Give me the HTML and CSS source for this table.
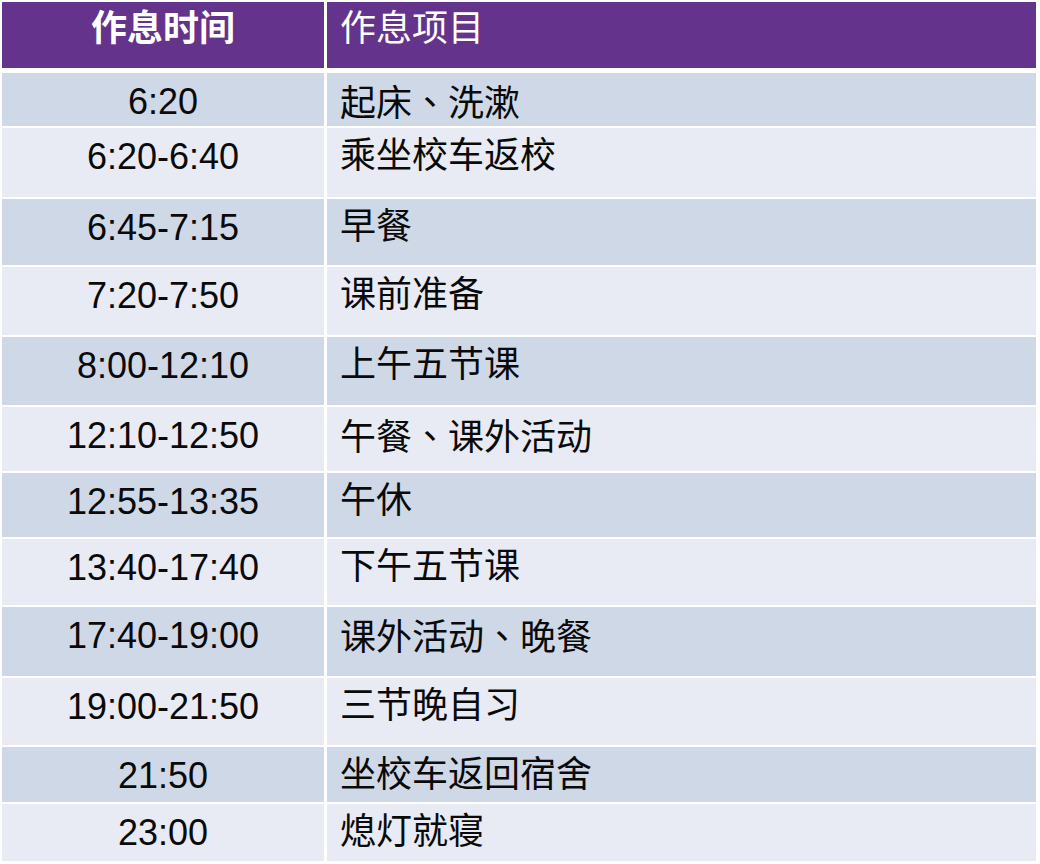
FILE: index.html
```html
<!DOCTYPE html>
<html lang="zh-CN">
<head>
<meta charset="utf-8">
<title>作息时间表</title>
<link rel="stylesheet" href="styles.css">
</head>
<body>
<div class="schedule">
  <div class="head">
    <div class="cell time th">作息时间</div>
    <div class="cell item th th-item">作息项目</div>
  </div>
  <div class="body">
    <div class="cell time dark">6:20</div><div class="cell item dark">起床<span class="punct" lang="zh-TW">、</span>洗漱</div>
    <div class="cell time light">6:20-6:40</div><div class="cell item light">乘坐校车返校</div>
    <div class="cell time dark">6:45-7:15</div><div class="cell item dark">早餐</div>
    <div class="cell time light">7:20-7:50</div><div class="cell item light">课前准备</div>
    <div class="cell time dark">8:00-12:10</div><div class="cell item dark">上午五节课</div>
    <div class="cell time light">12:10-12:50</div><div class="cell item light">午餐<span class="punct" lang="zh-TW">、</span>课外活动</div>
    <div class="cell time dark">12:55-13:35</div><div class="cell item dark">午休</div>
    <div class="cell time light">13:40-17:40</div><div class="cell item light">下午五节课</div>
    <div class="cell time dark">17:40-19:00</div><div class="cell item dark">课外活动<span class="punct" lang="zh-TW">、</span>晚餐</div>
    <div class="cell time light">19:00-21:50</div><div class="cell item light">三节晚自习</div>
    <div class="cell time dark">21:50</div><div class="cell item dark">坐校车返回宿舍</div>
    <div class="cell time light">23:00</div><div class="cell item light">熄灯就寝</div>
  </div>
</div>
</body>
</html>
```
FILE: styles.css
```css
html, body {
  margin: 0;
  padding: 0;
  background: #ffffff;
}

body {
  padding: 2px 0 0 2px;
  font-family: "Liberation Sans", "Noto Sans CJK SC", sans-serif;
  font-size: 36px;
  color: #0a0a0a;
}

.schedule {
  width: 1034px;
}

.head,
.body {
  display: grid;
  grid-template-columns: 322px 709px;
  column-gap: 3px;
}

.head {
  grid-template-rows: 66px;
  margin-bottom: 5px;
}

.body {
  row-gap: 2px;
  grid-template-rows: 53px 69px 66px 68px 68px 64px 64px 66px 69px 67px 55px 57px;
}

.cell {
  line-height: 43px;
  padding-top: 6px;
  box-sizing: border-box;
  white-space: nowrap;
  overflow: hidden;
}

.time {
  text-align: center;
  padding-top: 7px;
}

.item {
  padding-left: 13px;
}

.punct {
  font-family: "Noto Sans CJK TC", "Noto Sans CJK SC", sans-serif;
}

.th {
  background: #64338b;
  color: #ffffff;
  font-weight: bold;
  padding-top: 5px;
}

.th-item {
  font-weight: normal;
  padding-top: 5px;
}

.dark {
  background: #cfd8e7;
}

.light {
  background: #e8ebf4;
}
```
